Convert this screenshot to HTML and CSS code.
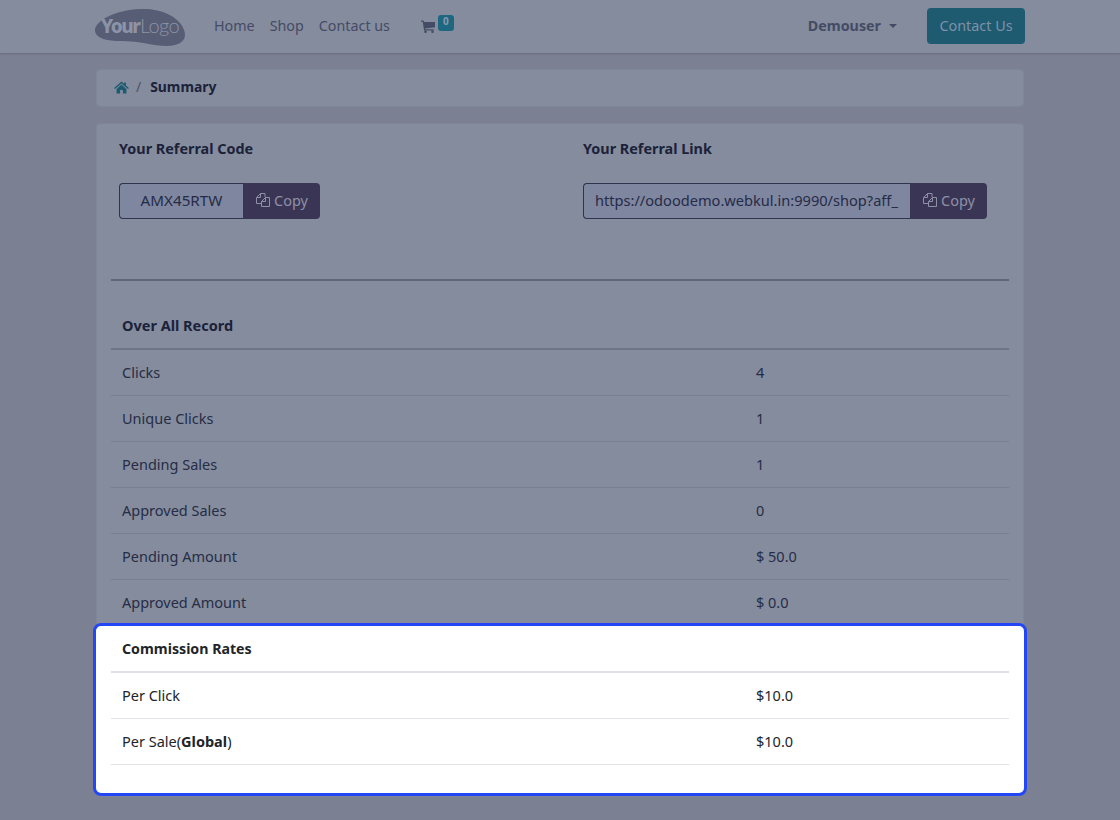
FILE: index.html
```html
<!DOCTYPE html>
<html lang="en">
<head>
<meta charset="utf-8">
<title>Summary</title>
<link rel="stylesheet" href="styles.css">
</head>
<body>
<header class="navbar">
  <div class="nav-inner">
    <svg class="logo" viewBox="0 0 90 37" width="90" height="37">
      <path class="logo-blob" d="M0 20C2 12 18 1 46 0C72 -1 90 13 90 26C90 33 82 37 72 37C58 37 46 32 26 32C12 32 -1 29 0 20Z"/>
      <text class="logo-your" x="6" y="24">Your</text>
      <text class="logo-logo" x="45" y="24">Logo</text>
    </svg>
    <nav class="nav-links">
      <a>Home</a>
      <a>Shop</a>
      <a>Contact us</a>
    </nav>
    <div class="cart">
      <svg class="cart-icon" viewBox="0 0 14 13" width="14" height="13"><path d="M0 .5H2.600L3 2H14V7.200L4 8.400 4.200 9.300H12.800V10.500H3.100L1.700 1.700H0Z"/><circle cx="4.500" cy="11.700" r="1.300"/><circle cx="11.500" cy="11.700" r="1.300"/></svg>
      <span class="badge">0</span>
    </div>
    <div class="user">Demouser <span class="caret"></span></div>
    <a class="btn-contact">Contact Us</a>
  </div>
</header>

<main class="container">
  <div class="breadcrumb">
    <svg class="home-icon" viewBox="0 0 16 14" width="15" height="13"><path d="M8 .5 10.800 3V1.500H12.800V4.800L16 7.600 15 8.700 8 2.600 1 8.700 0 7.600ZM2.700 8.500 8 3.900 13.300 8.500V13.500H9.500V9.800H6.500V13.500H2.700Z"/></svg>
    <span class="crumb-sep">/</span>
    <strong class="crumb-current">Summary</strong>
  </div>

  <section class="card">
    <div class="referral">
      <div class="ref-col">
        <h4 class="ref-title">Your Referral Code</h4>
        <div class="input-group">
          <div class="input input-code">AMX45RTW</div>
          <button class="btn-copy">
            <svg class="copy-icon" viewBox="0 0 16 16" width="16" height="16"><path d="M5.500 1.500H10V5M5.500 1.500 1.500 5.500V11.500H6M5.500 1.500V5.500H2M10.500 5.500H14.500V14.500H6.500V9.500L10.500 5.500V9.500H6.500"/></svg>
            Copy
          </button>
        </div>
      </div>
      <div class="ref-col">
        <h4 class="ref-title">Your Referral Link</h4>
        <div class="input-group">
          <div class="input input-link">https://odoodemo.webkul.in:9990/shop?aff_</div>
          <button class="btn-copy">
            <svg class="copy-icon" viewBox="0 0 16 16" width="16" height="16"><path d="M5.500 1.500H10V5M5.500 1.500 1.500 5.500V11.500H6M5.500 1.500V5.500H2M10.500 5.500H14.500V14.500H6.500V9.500L10.500 5.500V9.500H6.500"/></svg>
            Copy
          </button>
        </div>
      </div>
    </div>

    <hr class="divider">

    <table class="record">
      <colgroup><col class="col-label"><col></colgroup>
      <thead><tr><th colspan="2">Over All Record</th></tr></thead>
      <tbody>
        <tr><td>Clicks</td><td>4</td></tr>
        <tr><td>Unique Clicks</td><td>1</td></tr>
        <tr><td>Pending Sales</td><td>1</td></tr>
        <tr><td>Approved Sales</td><td>0</td></tr>
        <tr><td>Pending Amount</td><td>$ 50.0</td></tr>
        <tr><td>Approved Amount</td><td>$ 0.0</td></tr>
      </tbody>
    </table>

    <div class="spotlight">
      <table class="record record-lit">
        <colgroup><col class="col-label"><col></colgroup>
        <thead><tr><th colspan="2">Commission Rates</th></tr></thead>
        <tbody>
          <tr><td>Per Click</td><td>$10.0</td></tr>
          <tr><td>Per Sale(<b>Global</b>)</td><td>$10.0</td></tr>
        </tbody>
      </table>
    </div>
  </section>
</main>
</body>
</html>
```

FILE: styles.css
```css
* { box-sizing: border-box; }

html, body { height: 100%; }

body {
  margin: 0;
  overflow: hidden;
  background: #7b8092;
  color: #262d45;
  font-family: "Noto Sans", "Open Sans", sans-serif;
  font-size: 14.5px;
  line-height: 22px;
}

.navbar {
  height: 53px;
  padding-bottom: 2px;
  background: #848c9e;
  box-shadow: 0 1px 2px rgba(50, 55, 80, 0.3);
}

.nav-inner {
  width: 930px;
  height: 100%;
  margin: 0 auto;
  display: flex;
  align-items: center;
  font-size: 14.3px;
}

.logo { flex: none; margin-top: 3px; }
.logo-blob { fill: #565d75; }
.logo-your { fill: #8d93a6; font-family: "Noto Sans", sans-serif; font-size: 19px; font-weight: 800; letter-spacing: -1.5px; }
.logo-logo { fill: #8d93a6; font-family: "Lato", sans-serif; font-size: 20px; font-weight: 300; letter-spacing: -0.6px; }

.nav-links {
  display: flex;
  gap: 15px;
  margin-left: 29px;
  color: #444b65;
}

.cart {
  display: flex;
  margin-left: 31px;
  height: 22px;
}

.cart-icon { fill: #444b65; margin-top: 5px; }

.badge {
  width: 16px;
  height: 16px;
  margin: 0 0 0 3px;
  border-radius: 3px;
  background: #1e6780;
  color: #8b98ab;
  font-size: 10px;
  font-weight: 700;
  line-height: 13px;
  text-align: center;
}

.user {
  margin-left: auto;
  color: #444b65;
  font-weight: 700;
  display: flex;
  align-items: center;
}

.caret {
  width: 0;
  height: 0;
  margin-left: 8px;
  border-top: 4px solid #444b65;
  border-left: 4px solid transparent;
  border-right: 4px solid transparent;
}

.btn-contact {
  width: 98px;
  height: 36px;
  margin-left: 30px;
  border-radius: 4px;
  background: #1e5a70;
  color: #7f91a7;
  font-size: 14.4px;
  line-height: 36px;
  text-align: center;
}

.container {
  width: 928px;
  margin: 16px auto 0;
}

.breadcrumb {
  height: 38px;
  padding: 0 18px 2px;
  display: flex;
  align-items: center;
  background: #848c9e;
  border: 1px solid #7f869a;
  border-radius: 4px;
  font-size: 13.9px;
}

.home-icon { fill: #1e5a70; margin-left: -1px; }
.crumb-sep { margin: 0 9px 0 7px; color: #4b5269; }
.crumb-current { color: #1b2239; font-weight: 700; }

.card {
  margin-top: 16px;
  padding: 0 14px;
  background: #848c9e;
  border: 1px solid #7f869a;
  border-radius: 4px;
}

.referral {
  display: grid;
  grid-template-columns: 464px 1fr;
  padding: 14px 0 0 8px;
}

.ref-title {
  margin: 0 0 23px;
  color: #1b2239;
  font-size: 14.4px;
  font-weight: 700;
  line-height: 22px;
}

.input-group { display: flex; height: 36px; }

.input {
  height: 36px;
  background: #7f86a0;
  border: 1px solid #2e3350;
  border-right: 0;
  border-radius: 4px 0 0 4px;
  color: #252c47;
  line-height: 32px;
  white-space: nowrap;
  overflow: hidden;
}

.input-code { width: 124px; font-size: 15.2px; text-align: center; }
.input-link { width: 327px; padding-left: 11px; font-size: 14.6px; }

.btn-copy {
  width: 77px;
  height: 36px;
  padding: 0 0 2px;
  border: 0;
  border-radius: 0 4px 4px 0;
  background: #3b3555;
  color: #8d90a6;
  font: inherit;
  display: flex;
  align-items: center;
  justify-content: center;
  gap: 3px;
}

.copy-icon { fill: none; stroke: #8d90a6; stroke-width: 1; }

.divider {
  height: 2px;
  margin: 60px 0 23px;
  border: 0;
  background: #5f6679;
}

.record {
  width: 100%;
  border-collapse: separate;
  border-spacing: 0;
  table-layout: fixed;
}

.col-label { width: 634px; }

.record th,
.record td {
  height: 46px;
  padding: 0 11px 2px;
  text-align: left;
  border-bottom: 1px solid #797f93;
}

.record th {
  border-bottom: 2px solid #6d7488;
  color: #1b2239;
  font-weight: 700;
}

.spotlight {
  position: relative;
  margin: -3px -18px 0;
  padding: 0 15px 28px;
  background: #fff;
  border: 3px solid #2347f5;
  border-radius: 8px;
  color: #212529;
}

.record-lit th { height: 47px; padding-bottom: 0; color: #212529; font-size: 14.2px; border-bottom-color: #dee2e6; }
.record-lit td { border-bottom-color: #e1e3e8; }
```
